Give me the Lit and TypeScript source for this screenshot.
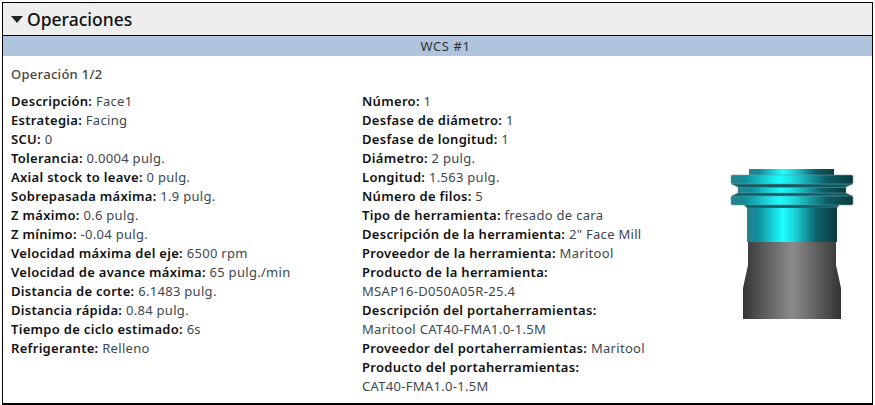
import { LitElement, html, css, svg } from "lit";
import { customElement } from "lit/decorators.js";

const left: [string, string][] = [
  ["Descripción:", "Face1"],
  ["Estrategia:", "Facing"],
  ["SCU:", "0"],
  ["Tolerancia:", "0.0004 pulg."],
  ["Axial stock to leave:", "0 pulg."],
  ["Sobrepasada máxima:", "1.9 pulg."],
  ["Z máximo:", "0.6 pulg."],
  ["Z mínimo:", "-0.04 pulg."],
  ["Velocidad máxima del eje:", "6500 rpm"],
  ["Velocidad de avance máxima:", "65 pulg./min"],
  ["Distancia de corte:", "6.1483 pulg."],
  ["Distancia rápida:", "0.84 pulg."],
  ["Tiempo de ciclo estimado:", "6s"],
  ["Refrigerante:", "Relleno"],
];
const right: [string, string][] = [
  ["Número:", "1"],
  ["Desfase de diámetro:", "1"],
  ["Desfase de longitud:", "1"],
  ["Diámetro:", "2 pulg."],
  ["Longitud:", "1.563 pulg."],
  ["Número de filos:", "5"],
  ["Tipo de herramienta:", "fresado de cara"],
  ["Descripción de la herramienta:", "2\" Face Mill"],
  ["Proveedor de la herramienta:", "Maritool"],
  ["Producto de la herramienta:", "MSAP16-D050A05R-25.4"],
  ["Descripción del portaherramientas:", "Maritool CAT40-FMA1.0-1.5M"],
  ["Proveedor del portaherramientas:", "Maritool"],
  ["Producto del portaherramientas:", "CAT40-FMA1.0-1.5M"],
];

@customElement("app-root")
export class AppRoot extends LitElement {
  static styles = css`
    :host { display: block; width: 875px; height: 405px; overflow: hidden; box-sizing: border-box; padding: 2px 2px 0 2px; background: #fff; font-family: "Noto Sans", sans-serif; }
    .panel { box-sizing: border-box; width: 871px; height: 403px; border: 1px solid #000; border-width: 1px 1px 2px 1px; display: flex; flex-direction: column; }
    .head { height: 32px; flex: none; background: #eeeeee; border-bottom: 1px solid #000; display: flex; align-items: center; gap: 4px; padding-left: 8px; font-size: 17.5px; font-weight: 500; color: #111; }
    .head svg { width: 12px; height: 7px; }
    .bar { height: 20px; flex: none; box-sizing: border-box; padding-left: 16px; background: #afc4dd; text-align: center; font-size: 13px; letter-spacing: .6px; line-height: 20px; color: #333; }
    .body { flex: 1; min-height: 0; padding: 9px 0 0 8px; position: relative; font-size: 13px; letter-spacing: .3px; color: #3c4650; }
    .title { line-height: 19px; color: #444; margin-bottom: 8px; font-weight: 500; }
    .cols { display: flex; }
    .col { line-height: 19px; }
    .col.a { width: 351px; }
    .col.b { width: 300px; }
    b { font-weight: 600; color: #111; }
    .v { white-space: nowrap; }
    .tool { position: absolute; left: 0; top: 0; width: 870px; height: 345px; pointer-events: none; }
  `;

  private row(r: [string, string]) {
    return html`<div><b>${r[0]}</b> <span class="v">${r[1]}</span></div>`;
  }

  render() {
    return html`<div class="panel">
      <div class="head"><svg viewBox="0 0 12 7"><path d="M0 0H12L6 7Z" fill="#222"/></svg>Operaciones</div>
      <div class="bar">WCS #1</div>
      <div class="body">
        <div class="title">Operación 1/2</div>
        <div class="cols">
          <div class="col a">${left.map((r) => this.row(r))}</div>
          <div class="col b">${right.map((r) => this.row(r))}</div>
        </div>
        <svg class="tool" viewBox="3 56 870 345">
          <defs>
            <linearGradient id="c"><stop offset="0" stop-color="#2a7f8a"/><stop offset=".12" stop-color="#118e9b"/><stop offset=".4" stop-color="#1bffff"/><stop offset=".52" stop-color="#1bd6db"/><stop offset=".78" stop-color="#0d5f68"/><stop offset="1" stop-color="#0b3a40"/></linearGradient>
            <linearGradient id="g"><stop offset="0" stop-color="#353535"/><stop offset=".5" stop-color="#8c8c8c"/><stop offset="1" stop-color="#333"/></linearGradient>
          </defs>
          ${svg`
          <rect x="749" y="169" width="85" height="6" fill="url(#c)"/>
          <path d="M731 184H853L846 187V193L853 196H731L738 193V187Z" fill="#0f5c66"/>
          <rect x="738" y="187.5" width="108" height="5.5" fill="url(#c)" stroke="#6f9aa0" stroke-width=".5"/>
          <path d="M732 175H852L853 176V183L852 184H732L731 183V176Z" fill="url(#c)" stroke="#6f9aa0" stroke-width=".6"/>
          <path d="M732 196H852L853 197V204L852 205H732L731 204V197Z" fill="url(#c)" stroke="#6f9aa0" stroke-width=".6"/>
          <path d="M744 205H839L837 208H747Z" fill="#146670"/>
          <rect x="747" y="208" width="90" height="34" fill="url(#c)"/>
          <path d="M748 242H836V265L841 288V319H743V288L748 265Z" fill="url(#g)"/>
          `}
        </svg>
      </div>
    </div>`;
  }
}
